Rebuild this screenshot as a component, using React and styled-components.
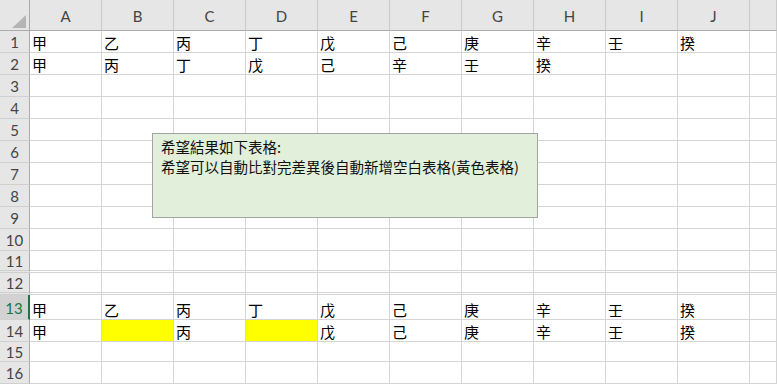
import React from "react";
import styled, { createGlobalStyle, css } from "styled-components";

const GlobalStyle = createGlobalStyle`
  html, body { margin: 0; padding: 0; background: #fff; overflow: hidden; }
  body { font-family: "Noto Sans CJK TC", "Noto Sans", sans-serif; }
`;

const COLS = ["A", "B", "C", "D", "E", "F", "G", "H", "I", "J", ""];
const ROW_HEIGHTS = [22, 22, 22, 22, 22, 22, 22, 22, 22, 22, 22, 22, 25, 22, 20, 22];
const DOUBLE_ROWS = [11, 12];
const ACTIVE_ROW = 13;

const DATA = {
  1: ["甲", "乙", "丙", "丁", "戊", "己", "庚", "辛", "壬", "揆"],
  2: ["甲", "丙", "丁", "戊", "己", "辛", "壬", "揆"],
  13: ["甲", "乙", "丙", "丁", "戊", "己", "庚", "辛", "壬", "揆"],
  14: ["甲", "", "丙", "", "戊", "己", "庚", "辛", "壬", "揆"],
};
const FILLS = { "14-1": "#ffff00", "14-3": "#ffff00" };

const Sheet = styled.div`
  position: relative;
  display: grid;
  grid-template-columns: 30px repeat(10, 72px) 1fr;
  grid-template-rows: 31px ${ROW_HEIGHTS.map((h) => `${h}px`).join(" ")};
  width: 777px;
  height: 384px;
  overflow: hidden;
`;

const Corner = styled.div`
  box-sizing: border-box;
  background: #e6e6e6;
  border-right: 1px solid #ababab;
  border-bottom: 1px solid #ababab;
  position: relative;
  svg { display: block; }
`;

const ColHead = styled.div`
  box-sizing: border-box;
  background: #e6e6e6;
  border-right: 1px solid #cacaca;
  border-bottom: 1px solid #ababab;
  display: flex;
  align-items: center;
  justify-content: center;
  padding-top: 2px;
  font-family: Lato, "Liberation Sans", sans-serif;
  font-size: 15px;
  color: #444;
`;

const RowHead = styled.div`
  box-sizing: border-box;
  background: ${(p) => (p.$active ? "#d2d2d2" : "#e6e6e6")};
  color: ${(p) => (p.$active ? "#217346" : "#444")};
  border-right: ${(p) => (p.$active ? "2px solid #217346" : "1px solid #ababab")};
  border-bottom: ${(p) => (p.$double ? "3px double #cfcfcf" : "1px solid #d0d0d0")};
  display: flex;
  align-items: center;
  justify-content: center;
  font-family: Lato, "Liberation Sans", sans-serif;
  font-size: 15px;
  padding-top: 1px;
`;

const Cell = styled.div`
  box-sizing: border-box;
  background: ${(p) => p.$fill || "#fff"};
  border-right: 1px solid #d4d4d4;
  border-bottom: 1px solid #d4d4d4;
  ${(p) =>
    p.$double &&
    css`
      border-bottom: 3px double #d4d4d4;
    `}
  display: flex;
  align-items: flex-end;
  padding: 0 0 0 2px;
  font-size: 15px;
  line-height: 19px;
  color: #000;
  white-space: nowrap;
  overflow: hidden;
`;

const TextBox = styled.div`
  position: absolute;
  left: 152px;
  top: 133px;
  width: 386px;
  height: 85px;
  box-sizing: border-box;
  background: #e2efda;
  border: 1px solid #a3a3a3;
  padding: 3px 8px;
  font-size: 14.5px;
  line-height: 20px;
  color: #111;
`;

export default function App() {
  return (
    <>
      <GlobalStyle />
      <Sheet>
        <Corner>
          <svg width="29" height="30" viewBox="0 0 29 30">
            <polygon points="26,15 26,28 12,28" fill="#b5b5b5" />
          </svg>
        </Corner>
        {COLS.map((c, i) => (
          <ColHead key={`h${i}`}>{c}</ColHead>
        ))}
        {ROW_HEIGHTS.map((_, ri) => {
          const r = ri + 1;
          const dbl = DOUBLE_ROWS.includes(r);
          return (
            <React.Fragment key={`r${r}`}>
              <RowHead $active={r === ACTIVE_ROW} $double={dbl}>
                {r}
              </RowHead>
              {COLS.map((_, ci) => (
                <Cell key={`c${r}-${ci}`} $double={dbl} $fill={FILLS[`${r}-${ci}`]}>
                  {(DATA[r] && DATA[r][ci]) || ""}
                </Cell>
              ))}
            </React.Fragment>
          );
        })}
        <TextBox>
          希望結果如下表格:
          <br />
          希望可以自動比對完差異後自動新增空白表格(黃色表格)
        </TextBox>
      </Sheet>
    </>
  );
}
